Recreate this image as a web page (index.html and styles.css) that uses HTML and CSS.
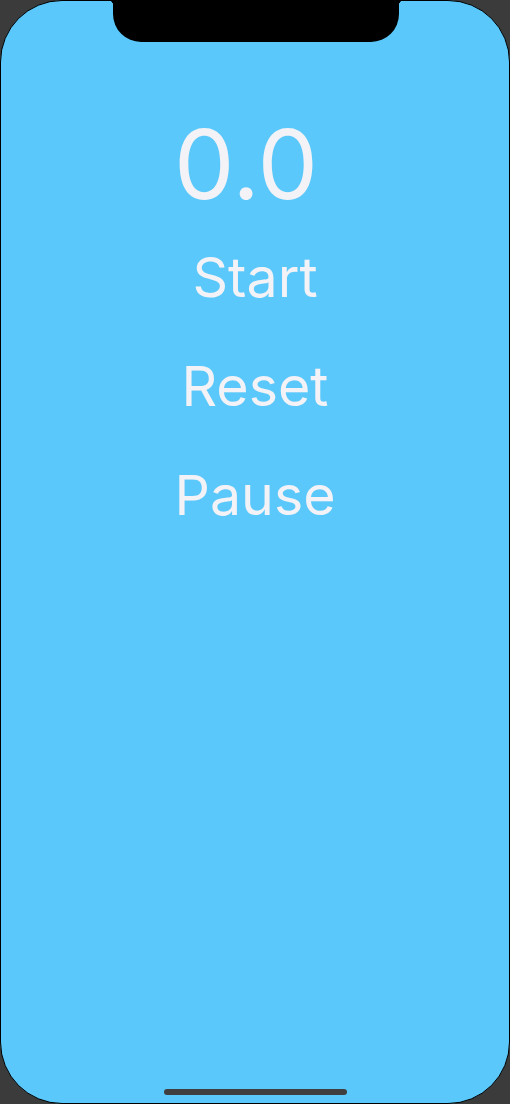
FILE: index.html
```html
<!DOCTYPE html>
<html lang="en">
<head>
<meta charset="utf-8">
<title>Stopwatch</title>
<link rel="stylesheet" href="styles.css">
</head>
<body>
<div class="device">
  <div class="notch"></div>
  <main class="stopwatch">
    <div class="time">0.0</div>
    <button class="action">Start</button>
    <button class="action">Reset</button>
    <button class="action">Pause</button>
  </main>
  <div class="home-indicator"></div>
</div>
</body>
</html>
```

FILE: styles.css
```css
html, body {
  margin: 0;
  padding: 0;
  background: #3b3b3b;
}

body {
  width: 510px;
  height: 1104px;
  overflow: hidden;
  font-family: Inter, "Noto Sans", sans-serif;
}

.device {
  position: relative;
  box-sizing: border-box;
  width: 510px;
  height: 1104px;
  background: #5ac8fa;
  border: 1px solid #000;
  border-radius: 62px;
  overflow: hidden;
}

.notch {
  position: absolute;
  top: -1px;
  left: 112px;
  width: 286px;
  height: 42px;
  background: #000;
  border-radius: 0 0 28px 28px;
}

.notch::before,
.notch::after {
  content: "";
  position: absolute;
  top: 0;
  width: 6px;
  height: 6px;
}

.notch::before {
  left: -6px;
  background: radial-gradient(circle at 0 100%, transparent 6px, #000 6.5px);
}

.notch::after {
  right: -6px;
  background: radial-gradient(circle at 100% 100%, transparent 6px, #000 6.5px);
}

.stopwatch {
  display: flex;
  flex-direction: column;
  align-items: center;
  padding-top: 115px;
  color: #f2f2f7;
}

.time {
  font-size: 96px;
  line-height: 96px;
  font-weight: 400;
  margin-right: 18px;
  margin-bottom: 37px;
}

.action {
  appearance: none;
  border: 0;
  background: none;
  padding: 0;
  font-family: inherit;
  color: inherit;
  font-size: 55.5px;
  line-height: 55px;
  font-weight: 400;
  margin-bottom: 54px;
  cursor: pointer;
}

.home-indicator {
  position: absolute;
  left: 163px;
  bottom: 8px;
  width: 183px;
  height: 6px;
  border-radius: 3px;
  background: #3f3f3f;
}
```
